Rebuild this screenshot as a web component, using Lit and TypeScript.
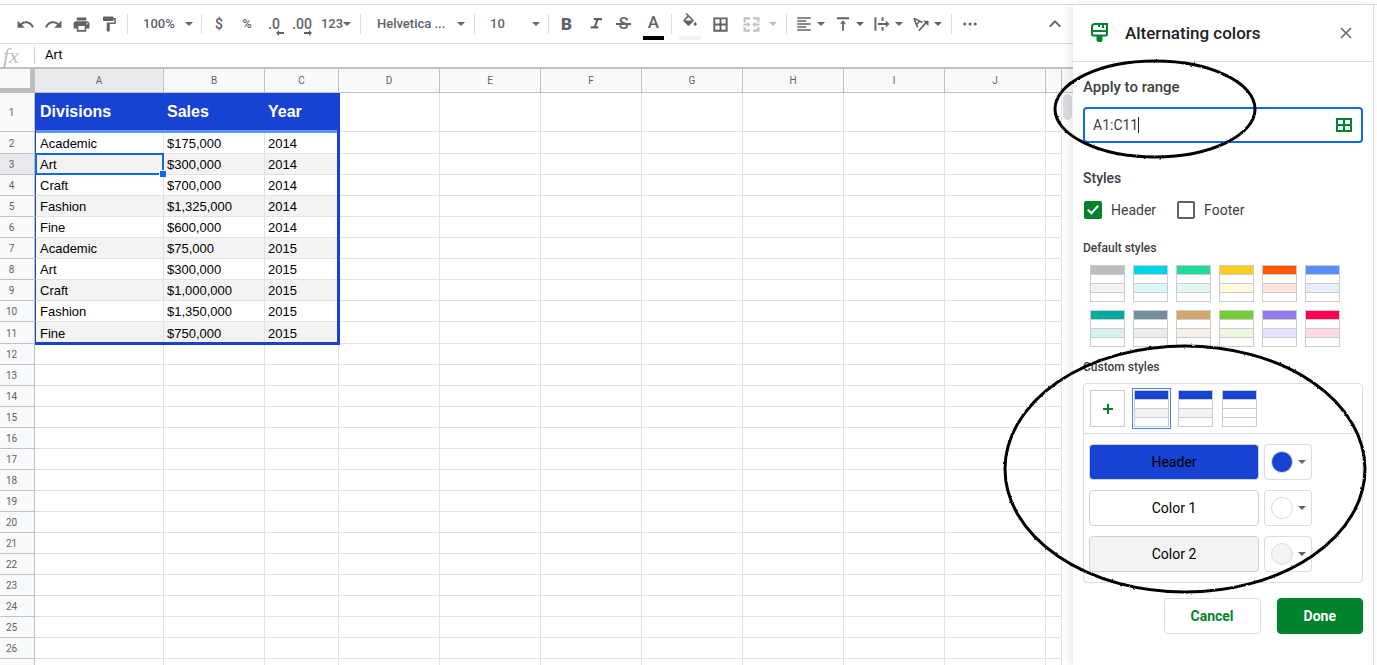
import { LitElement, html, css, svg, nothing } from "lit";
import { customElement, property, state } from "lit/decorators.js";
import { classMap } from "lit/directives/class-map.js";
import { styleMap } from "lit/directives/style-map.js";

const icons = {
  undo: svg`<path d="M12.5 8c-2.65 0-5.05.99-6.9 2.6L2 7v9h9l-3.62-3.62c1.39-1.16 3.16-1.88 5.12-1.88 3.54 0 6.55 2.31 7.6 5.5l2.37-.78C21.08 11.03 17.15 8 12.5 8z"/>`,
  redo: svg`<path d="M18.4 10.6C16.55 8.99 14.15 8 11.5 8c-4.65 0-8.58 3.03-9.96 7.22L3.9 16c1.05-3.19 4.05-5.5 7.6-5.5 1.95 0 3.73.72 5.12 1.88L13 16h9V7l-3.6 3.6z"/>`,
  print: svg`<path d="M19 8H5c-1.66 0-3 1.34-3 3v6h4v4h12v-4h4v-6c0-1.66-1.34-3-3-3zm-3 11H8v-5h8v5zm3-7c-.55 0-1-.45-1-1s.45-1 1-1 1 .45 1 1-.45 1-1 1zm-1-9H6v4h12V3z"/>`,
  paint: svg`<path d="M18 4V3c0-.55-.45-1-1-1H5c-.55 0-1 .45-1 1v4c0 .55.45 1 1 1h12c.55 0 1-.45 1-1V6h1v4H9v11c0 .55.45 1 1 1h2c.55 0 1-.45 1-1v-9h8V4h-3z"/>`,
  italic: svg`<path d="M9 4v3h3.2l-3 8H5v3h10v-3h-2.800l3-8H20V4z"/>`,
  fill: svg`<path d="M16.56 8.94L7.62 0 6.21 1.41l2.38 2.38-5.15 5.15c-.59.59-.59 1.54 0 2.12l5.5 5.5c.29.29.68.44 1.06.44s.77-.15 1.06-.44l5.5-5.5c.59-.58.59-1.53 0-2.12zM5.21 10L10 5.21 14.79 10H5.21zM19 11.5s-2 2.17-2 3.5c0 1.1.9 2 2 2s2-.9 2-2c0-1.33-2-3.5-2-3.5z"/>`,
  borders: svg`<path d="M3 3v18h18V3H3zm7.8 15.6H5.4v-5.4h5.4v5.4zm0-7.8H5.4V5.4h5.4v5.4zm7.8 7.8h-5.4v-5.4h5.4v5.4zm0-7.8h-5.4V5.4h5.4v5.4z"/>`,
  merge: svg`<path fill="none" stroke="currentColor" stroke-width="2.7" d="M3.3 9V4.3H10M14 4.3h6.7V9M3.3 15v4.7H10M14 19.7h6.7V15M2 12h5M22 12h-5"/><path d="M7 8.5l4 3.5-4 3.5zM17 8.5L13 12l4 3.5z"/>`,
  align: svg`<path d="M15 15H3v2h12v-2zm0-8H3v2h12V7zM3 13h18v-2H3v2zm0 8h18v-2H3v2zM3 3v2h18V3H3z"/>`,
  valign: svg`<path d="M8 11.5h2.8V21h2.4v-9.500H16l-4-4.500-4 4.500zM4 3v2.500h16V3H4z"/>`,
  wrap: svg`<path d="M2 3h2.500v18H2zM11.500 3H14v5h-2.500zM11.500 16H14v5h-2.500zM6.500 10.800H17V7.500l5 4.500-5 4.500v-3.300H6.500z"/>`,
  rotate: svg`<path fill="none" stroke="currentColor" stroke-width="2" d="M2.500 4.500l11.500 5.500M2.500 4.500l5 12M10.500 8l-4.500 5"/><path fill="none" stroke="currentColor" stroke-width="2.400" d="M9 21L19.500 9.500"/><path d="M15 7.500h7V15z"/>`,
  more: svg`<circle cx="5" cy="12" r="2"/><circle cx="12" cy="12" r="2"/><circle cx="19" cy="12" r="2"/>`,
  up: svg`<path fill="none" stroke="currentColor" stroke-width="2.600" d="M5 15.500l7-7 7 7"/>`,
};
type IconName = keyof typeof icons;

const icon = (name: IconName, size = 18) =>
  html`<svg class="icon" width=${size} height=${size} viewBox="0 0 24 24" aria-hidden="true">${icons[name]}</svg>`;

const caret = html`<svg class="caret" width="8" height="4" viewBox="0 0 8 4" aria-hidden="true"><path d="M0 0h8L4 4z"/></svg>`;

@customElement("sheet-toolbar")
export class SheetToolbar extends LitElement {
  static styles = css`
    :host { display: flex; align-items: center; height: 38px; padding: 0 4px 0 11px; border-bottom: 1px solid #dadce0; font: 500 13px/16px Roboto, sans-serif; color: #5f6368; overflow: hidden; }
    button { display: flex; align-items: center; justify-content: center; flex: none; width: 28px; height: 28px; margin: 0; padding: 0; border: 0; background: none; font: inherit; color: inherit; position: relative; }
    svg { fill: currentColor; flex: none; display: block; }
    .sep { flex: none; width: 1px; height: 20px; margin: 0 3px; background: #dadce0; }
    .group { display: flex; align-items: center; }
    .history { padding-right: 1px; }
    .style button { width: 29px; }
    .paint button { width: 30px; }
    .position { padding-right: 2px; }
    button.split { justify-content: flex-start; gap: 4px; width: 39px; padding-left: 5px; }
    .paint button.merge { width: 48px; padding-left: 7px; gap: 8px; opacity: 0.4; }
    button.pick { justify-content: space-between; width: 67px; padding: 0 5px 0 12px; }
    button.family { width: 107px; padding: 0 6px 0 13px; }
    button.number { width: 40px; padding-right: 2px; }
    .symbol { font-size: 14px; }
    .decimal { padding-right: 2px; }
    .arrow { position: absolute; right: 5px; bottom: 2px; }
    .bar { position: absolute; left: 4px; right: 4px; bottom: -2px; height: 4px; background: #000; }
    .bar.pale { background: #f3f3f3; }
    .raised { padding-bottom: 5px; }
    .bold { font-size: 17px; font-weight: 900; }
    .strike { font-size: 16px; font-weight: 500; padding-right: 2px; }
    .strike::after { content: ""; position: absolute; left: 6px; right: 8px; top: 13px; height: 2px; background: currentColor; }
    .letter { font-size: 17px; }
    .more { width: 30px; }
    .collapse { margin-left: auto; }
  `;

  render() {
    const sep = html`<span class="sep"></span>`;
    return html`
      <div class="group history">
        <button aria-label="Undo">${icon("undo", 19)}</button>
        <button aria-label="Redo">${icon("redo", 19)}</button>
        <button aria-label="Print">${icon("print", 19)}</button>
        <button aria-label="Paint format">${icon("paint")}</button>
      </div>
      ${sep}
      <button class="pick" aria-label="Zoom"><span>100%</span>${caret}</button>
      ${sep}
      <button class="symbol" aria-label="Format as currency">$</button>
      <button aria-label="Format as percent">%</button>
      <button class="symbol decimal" aria-label="Decrease decimal places"><span>.0</span>
        <svg class="arrow" width="8" height="6" viewBox="0 0 8 6"><path d="M0 3l3-3v2h5v2H3v2z"/></svg></button>
      <button class="symbol decimal" aria-label="Increase decimal places"><span>.00</span>
        <svg class="arrow" width="8" height="6" viewBox="0 0 8 6"><path d="M8 3L5 0v2H0v2h5v2z"/></svg></button>
      <button class="number" aria-label="More formats"><span>123</span>${caret}</button>
      ${sep}
      <button class="pick family" aria-label="Font"><span>Helvetica ...</span>${caret}</button>
      ${sep}
      <button class="pick" aria-label="Font size"><span>10</span>${caret}</button>
      ${sep}
      <div class="group style">
        <button class="bold" aria-label="Bold">B</button>
        <button aria-label="Italic">${icon("italic")}</button>
        <button class="strike" aria-label="Strikethrough">S</button>
        <button class="letter raised" aria-label="Text color">A<span class="bar"></span></button>
      </div>
      ${sep}
      <div class="group paint">
        <button class="raised" aria-label="Fill color">${icon("fill")}<span class="bar pale"></span></button>
        <button aria-label="Borders">${icon("borders", 19)}</button>
        <button class="split merge" aria-label="Merge cells" disabled>${icon("merge", 19)}${caret}</button>
      </div>
      ${sep}
      <div class="group position">
        <button class="split" aria-label="Horizontal align">${icon("align")}${caret}</button>
        <button class="split" aria-label="Vertical align">${icon("valign")}${caret}</button>
        <button class="split" aria-label="Text wrapping">${icon("wrap")}${caret}</button>
        <button class="split" aria-label="Text rotation">${icon("rotate")}${caret}</button>
      </div>
      ${sep}
      <button class="more" aria-label="More">${icon("more")}</button>
      <button class="collapse" aria-label="Hide the menus">${icon("up")}</button>
    `;
  }
}

const data = [
  ["Divisions", "Sales", "Year"],
  ["Academic", "$175,000", "2014"],
  ["Art", "$300,000", "2014"],
  ["Craft", "$700,000", "2014"],
  ["Fashion", "$1,325,000", "2014"],
  ["Fine", "$600,000", "2014"],
  ["Academic", "$75,000", "2015"],
  ["Art", "$300,000", "2015"],
  ["Craft", "$1,000,000", "2015"],
  ["Fashion", "$1,350,000", "2015"],
  ["Fine", "$750,000", "2015"],
];
const columns = ["A", "B", "C", "D", "E", "F", "G", "H", "I", "J", ""];

@customElement("sheet-grid")
export class SheetGrid extends LitElement {
  static styles = css`
    :host { display: flex; flex: 1; min-height: 0; overflow: hidden; }
    .area { flex: 1; min-width: 0; overflow: hidden; }
    table { width: 100%; table-layout: fixed; border-collapse: separate; border-spacing: 0; font: 13px/16px "Liberation Sans", Arial, sans-serif; color: #000; }
    th, td { box-sizing: border-box; height: 21px; padding: 2px 0 0 3px; border: solid #e2e2e2; border-width: 0 1px 1px 0; text-align: left; white-space: nowrap; position: relative; }
    thead th { height: 24px; padding: 0; border-color: #c0c0c0; text-align: center; background: #f8f9fa; font: 10px/12px Roboto, sans-serif; color: #5f6368; }
    thead .corner { border: solid #bdbdbd; border-width: 0 5px 5px 0; background: #f8f9fa; }
    tbody th { padding: 2px 11px 0 0; border-color: #c0c0c0; text-align: center; background: #f8f9fa; font: 10px/12px Roboto, sans-serif; color: #5f6368; }
    thead .current, tbody .current { background: #e8eaed; }
    .rowhead { width: 35px; }
    .name { width: 129px; }
    .year { width: 74px; }
    .std { width: 101px; }
    .tall > * { height: 22px; }
    .title > * { height: 39px; }
    .title .cell { padding-top: 0; background: #1742d2; border-color: #1742d2; color: #fff; font-size: 16px; font-weight: 700; }
    .band .cell { background: #f3f3f3; }
    .first { border-left: 1px solid #1742d2; padding-left: 4px; }
    .title .cell::before { content: ""; position: absolute; z-index: 1; left: 0; right: -1px; bottom: -2px; height: 3px; background: #6394f3; }
    .last::after { content: ""; position: absolute; z-index: 2; top: 0; right: -2px; bottom: -2px; width: 3px; background: #1742d2; }
    .end .cell::before { content: ""; position: absolute; z-index: 1; left: -1px; right: -1px; bottom: -2px; height: 3px; background: #1742d2; }
    .selected::before { content: ""; position: absolute; z-index: 1; top: -1px; left: -1px; right: -1px; bottom: -1px; border: 2px solid #0f67f0; }
    .selected::after { content: ""; position: absolute; z-index: 2; right: -3px; bottom: -3px; width: 6px; height: 6px; background: #0f67f0; border: solid #fff; border-width: 1px 0 0 1px; }
    .scroll { flex: none; width: 11px; }
    .gutter { height: 23px; border-bottom: 1px solid #c0c0c0; background: #f8f9fa; }
    .thumb { height: 26px; margin: 1px 1px 0; border-radius: 5px; background: #dadce0; }
  `;

  render() {
    const rows = Array.from({ length: 27 }, (_, i) => data[i] ?? []);
    return html`
      <div class="area">
        <table>
          <colgroup>
            <col class="rowhead" /><col class="name" /><col class="std" /><col class="year" />
            ${columns.slice(3, -1).map(() => html`<col class="std" />`)}<col />
          </colgroup>
          <thead>
            <tr><td class="corner"></td>${columns.map((c) => html`<th scope="col" class=${c === "A" ? "current" : ""}>${c}</th>`)}</tr>
          </thead>
          <tbody>
            ${rows.map(
              (row, r) => html`<tr class=${classMap({ title: r === 0, tall: r === 1 || r === 10, band: r > 0 && r <= 10 && r % 2 === 0, end: r === 10 })}>
                <th scope="row" class=${r === 2 ? "current" : ""}>${r < 26 ? r + 1 : nothing}</th>
                ${columns.map((_, c) => html`<td class=${classMap({
                  cell: row.length > c, first: c === 0 && row.length > 0, last: c === 2 && row.length > 0, selected: r === 2 && c === 0,
                })}>${row[c] ?? nothing}</td>`)}
              </tr>`
            )}
          </tbody>
        </table>
      </div>
      <div class="scroll"><div class="gutter"></div><div class="thumb"></div></div>
    `;
  }
}

@customElement("style-swatch")
export class StyleSwatch extends LitElement {
  @property() head = "#bdbdbd";
  @property() band = "#f3f3f3";
  @property() label = "";
  @property({ type: Boolean }) selected = false;

  static styles = css`
    :host { display: block; width: 35px; height: 37px; }
    button { display: grid; grid-template-rows: repeat(4, 8px); gap: 1px; width: 100%; margin: 0; padding: 1px; border: 0; background: #ccc; }
    span { background: #fff; }
    .selected { outline: 1px solid #4285f4; outline-offset: 1px; }
  `;

  render() {
    return html`<button class=${this.selected ? "selected" : ""} aria-label=${this.label}>
      <span style=${styleMap({ background: this.head })}></span><span></span>
      <span style=${styleMap({ background: this.band })}></span><span></span>
    </button>`;
  }
}

const defaults = [
  ["Grey", "#bdbdbd", "#f3f3f3"], ["Cyan", "#00d4e9", "#dcf7fa"], ["Green", "#21da96", "#e2f8ec"],
  ["Yellow", "#fbcd20", "#fef8dc"], ["Orange", "#ff5a00", "#ffe5dc"], ["Blue", "#568ffc", "#e7edfd"],
  ["Teal", "#00aa9d", "#daf2ef"], ["Slate", "#738f9c", "#e8edf0"], ["Tan", "#d1a76c", "#fbf0e9"],
  ["Lime", "#77cb35", "#ebf7e0"], ["Purple", "#8f7eed", "#e7e3fc"], ["Pink", "#ff0058", "#ffd9e6"],
];
const parts = [
  ["Header", "#1742d2"],
  ["Color 1", "#ffffff"],
  ["Color 2", "#f3f3f3"],
];

@customElement("alternating-panel")
export class AlternatingPanel extends LitElement {
  @state() private range = "A1:C11";

  static styles = css`
    :host { display: block; position: relative; flex: none; box-sizing: border-box; width: 301px; margin-right: 3px; background: #fff; border-right: 1px solid #dadce0; box-shadow: -3px 0 8px rgba(60, 64, 67, 0.12); font: 14px/20px Roboto, sans-serif; color: #3c4043; }
    button { margin: 0; padding: 0; font: inherit; }
    header { display: flex; align-items: center; height: 56px; padding: 0 18px; border-bottom: 1px solid #dadce0; }
    h1 { flex: 1; margin: 0 0 0 17px; font-size: 17px; font-weight: 500; color: #202124; }
    .close { display: flex; padding: 3px; border: 0; background: none; }
    .body { padding: 15px 10px 0; }
    .label { display: block; font-size: 15px; font-weight: 500; }
    .range { position: relative; display: flex; align-items: center; box-sizing: border-box; height: 36px; margin-top: 10px; padding: 0 9px 0 8px; border: 2px solid #0f67f0; border-radius: 4px; }
    .range input { flex: 1; min-width: 0; margin: 0; padding: 0; border: 0; outline: 0; background: none; font: inherit; color: inherit; }
    .cursor { position: absolute; left: 53px; top: 8px; width: 1px; height: 16px; background: #202124; }
    .pick { display: flex; border: 0; background: none; }
    h2 { margin: 25px 0 0; font-size: 14px; font-weight: 500; line-height: 20px; }
    h3 { margin: 0; font-size: 12px; font-weight: 500; line-height: 16px; }
    .checks { display: flex; gap: 21px; margin: 13px 0 21px 1px; }
    .checks label { display: flex; align-items: center; gap: 9px; line-height: 18px; }
    .checks input { appearance: none; display: grid; place-items: center; box-sizing: border-box; width: 18px; height: 18px; margin: 0; border: 2px solid #5f6368; border-radius: 2px; background: #fff; }
    .checks input:checked { border-color: #00832d; background: #00832d; }
    .checks input:checked::before { content: ""; width: 4px; height: 9px; margin-bottom: 3px; border: solid #fff; border-width: 0 2px 2px 0; transform: rotate(42deg); }
    .defaults { display: grid; grid-template-columns: repeat(6, 35px); gap: 8px; margin: 9px 0 12px 7px; }
    .custom { margin-top: 8px; border: 1px solid #dadce0; border-radius: 4px; }
    .saved { display: flex; gap: 9px; padding: 6px; border-bottom: 1px solid #dadce0; }
    .add { display: grid; place-items: center; box-sizing: border-box; width: 35px; height: 37px; border: 1px solid #ccc; background: #fff; }
    .parts { display: grid; grid-template-columns: 170px 48px; gap: 10px 5px; padding: 10px 5px; }
    .part { height: 36px; border: 1px solid #d0d0d0; border-radius: 4px; font-size: 14px; color: #000; }
    .color { display: flex; align-items: center; gap: 5px; padding-left: 6px; height: 36px; border: 1px solid #dadce0; border-radius: 4px; background: #fff; color: #5f6368; }
    .dot { box-sizing: border-box; width: 22px; height: 22px; border: 1px solid #dadce0; border-radius: 50%; }
    .actions { display: flex; justify-content: flex-end; gap: 16px; margin-top: 15px; }
    .actions button { height: 36px; padding: 0 26px; border: 1px solid #dadce0; border-radius: 4px; background: #fff; font-weight: 700; color: #00832d; }
    .actions .done { border-color: #00832d; background: #00832d; color: #fff; }
    .caret { fill: currentColor; }
    .marks { position: absolute; z-index: 3; inset: 0; width: 100%; height: 100%; overflow: visible; pointer-events: none; fill: none; stroke: #000; stroke-width: 3; }
  `;

  render() {
    return html`
      <header>
        <svg width="17" height="20" viewBox="0 0 17 20" fill="none" stroke="#00832d" stroke-width="2" aria-hidden="true">
          <path d="M4 1h12v10.500q0 1-1 1H2q-1 0-1-1V4q0-3 3-3zM1 8h15M8 1v3M12 1v4"/>
          <path d="M5.500 13h6v4q0 2-2 2h-2q-2 0-2-2z" fill="#00832d" stroke="none"/>
        </svg>
        <h1>Alternating colors</h1>
        <button class="close" aria-label="Close"><svg width="12" height="12" viewBox="0 0 12 12" stroke="#5f6368" stroke-width="1.500"><path d="M1 1l10 10M11 1L1 11"/></svg></button>
      </header>
      <div class="body">
        <label class="label" for="range">Apply to range</label>
        <div class="range">
          <input id="range" type="text" .value=${this.range} @input=${(e: Event) => (this.range = (e.target as HTMLInputElement).value)} />
          <span class="cursor"></span>
          <button class="pick" aria-label="Select data range"><svg width="16" height="14" viewBox="0 0 16 14" fill="none" stroke="#00832d" stroke-width="2"><path d="M1 1h14v12H1zM8 1v12M1 7h14"/></svg></button>
        </div>
        <h2>Styles</h2>
        <div class="checks">
          <label><input type="checkbox" checked />Header</label>
          <label><input type="checkbox" />Footer</label>
        </div>
        <h3>Default styles</h3>
        <div class="defaults">
          ${defaults.map(([label, head, band]) => html`<style-swatch label=${label} head=${head} band=${band}></style-swatch>`)}
        </div>
        <h3>Custom styles</h3>
        <div class="custom">
          <div class="saved">
            <button class="add" aria-label="Add style"><svg width="12" height="12" viewBox="0 0 12 12" stroke="#00832d" stroke-width="2"><path d="M6 1v10M1 6h10"/></svg></button>
            <style-swatch label="Custom style 1" head="#1742d2" selected></style-swatch>
            <style-swatch label="Custom style 2" head="#1742d2"></style-swatch>
            <style-swatch label="Custom style 3" head="#1742d2" band="#ffffff"></style-swatch>
          </div>
          <div class="parts">
            ${parts.map(([name, color]) => html`
              <button class="part" style=${styleMap({ background: color })}>${name}</button>
              <button class="color" aria-label="${name} fill"><span class="dot" style=${styleMap({ background: color })}></span>${caret}</button>`)}
          </div>
        </div>
        <div class="actions">
          <button>Cancel</button>
          <button class="done">Done</button>
        </div>
      </div>
      <svg class="marks" aria-hidden="true">
        <filter id="rough"><feTurbulence type="fractalNoise" baseFrequency="0.3" numOctaves="2"/><feDisplacementMap in="SourceGraphic" scale="2" xChannelSelector="R" yChannelSelector="G"/></filter>
        <g filter="url(#rough)">
          <ellipse cx="82" cy="104" rx="100" ry="48"/>
          <ellipse cx="112" cy="464" rx="180" ry="123"/>
        </g>
      </svg>
    `;
  }
}

@customElement("app-root")
export class AppRoot extends LitElement {
  static styles = css`
    :host { display: flex; flex-direction: column; box-sizing: border-box; height: 100vh; padding-top: 4px; overflow: hidden; background: #fff; }
    .work { display: flex; flex: 1; min-height: 0; border-top: 1px solid #dadce0; }
    main { display: flex; flex-direction: column; flex: 1; min-width: 0; }
    .formula { display: flex; flex: none; align-items: center; height: 23px; border-bottom: 2px solid #c0c0c0; }
    .fx { width: 34px; padding-left: 3px; box-sizing: border-box; font: italic 22px/20px "Liberation Serif", serif; color: #bdbdbd; }
    .formula input { flex: 1; min-width: 0; height: 15px; margin: 0; padding: 0 0 2px 10px; border: 0; border-left: 1px solid #ccc; outline: 0; font: 13px/15px Roboto, sans-serif; color: #000; }
  `;

  render() {
    return html`
      <div class="work">
        <main>
          <sheet-toolbar></sheet-toolbar>
          <div class="formula"><label class="fx" for="formula">fx</label><input id="formula" type="text" value="Art" /></div>
          <sheet-grid></sheet-grid>
        </main>
        <alternating-panel></alternating-panel>
      </div>
    `;
  }
}
